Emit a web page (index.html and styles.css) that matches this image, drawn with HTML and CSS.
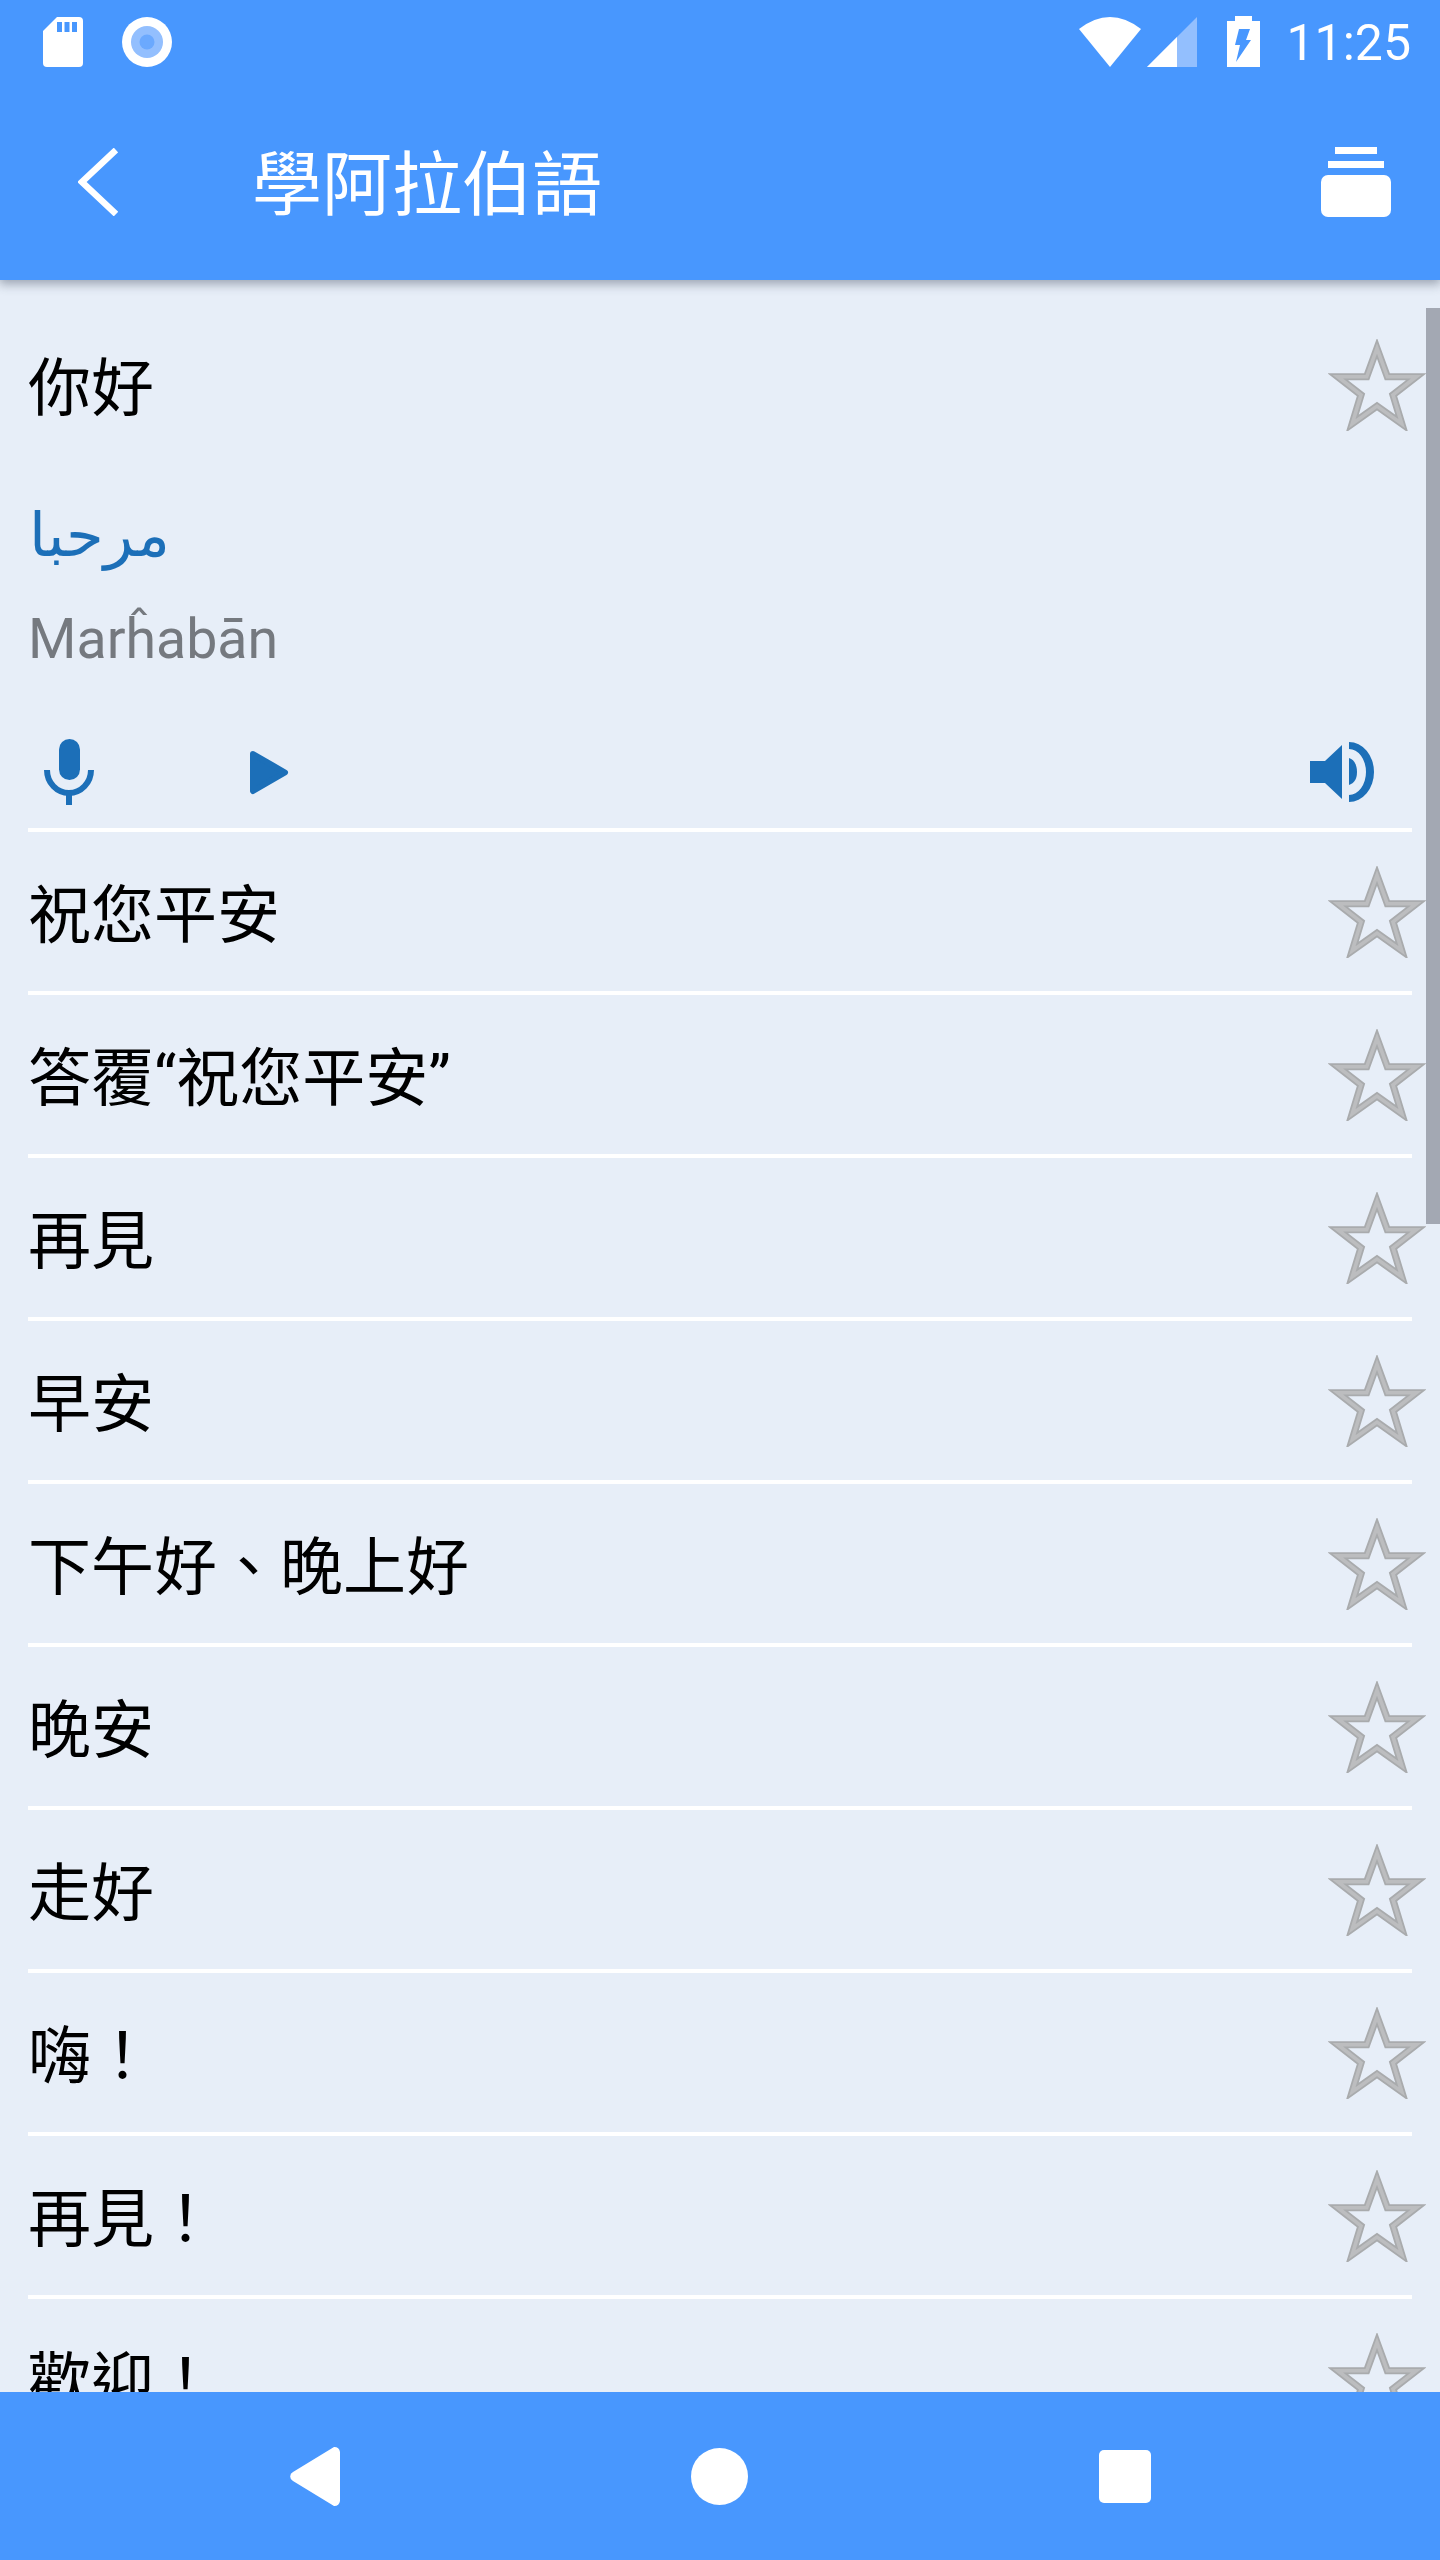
FILE: index.html
```html
<!DOCTYPE html>
<html lang="zh-Hant">
  <head>
    <title>學阿拉伯語</title>
    <meta charset="UTF-8" />
    <link rel="stylesheet" href="styles.css">
  </head>
  <body>
    <svg class="defs" width="0" height="0">
      <symbol id="star" viewBox="1.500 2 95 89">
        <polygon class="star-out" points="49,11 59,38.500 87,38.500 64.500,56 73,84 49,67 25,84 33.500,56 11,38.500 39,38.500" />
        <polygon class="star-in" points="49,11 59,38.500 87,38.500 64.500,56 73,84 49,67 25,84 33.500,56 11,38.500 39,38.500" />
      </symbol>
    </svg>

    <div class="phone">
      <header class="top">
        <div class="status">
          <div class="status-left">
            <svg width="40" height="50" viewBox="0 0 40 50">
              <path class="white" d="M14 0H36a4 4 0 0 1 4 4V46a4 4 0 0 1-4 4H4a4 4 0 0 1-4-4V14Z" />
              <path class="blue" d="M14 5h5v10h-5zM21.500 5h5v10h-5zM29 5h5v10h-5z" />
            </svg>
            <svg width="50" height="50" viewBox="0 0 50 50">
              <circle class="white" cx="25" cy="25" r="25" />
              <circle class="light" cx="25" cy="25" r="16" />
              <circle class="mid" cx="25" cy="25" r="7.500" />
            </svg>
          </div>
          <div class="status-right">
            <svg class="wifi" width="62" height="50" viewBox="0 0 62 50">
              <path class="white" d="M0 12Q31-12 62 12L31 50Z" />
            </svg>
            <svg class="signal" width="50" height="50" viewBox="0 0 50 50">
              <path class="light" d="M50 0V50H0Z" />
              <path class="white" d="M30 20V50H0Z" />
            </svg>
            <svg class="battery" width="33" height="51" viewBox="0 0 33 51">
              <path class="white" d="M8 0H25V5H33V51H0V5H8Z" />
              <path class="blue" d="M12 13H23L19 24H24L9 46L13 29H8Z" />
            </svg>
            <span class="time">11:25</span>
          </div>
        </div>
        <div class="toolbar">
          <svg class="back" width="40" height="68" viewBox="0 0 40 68">
            <polyline points="38,2 4,34 38,66" />
          </svg>
          <div class="title">學阿拉伯語</div>
          <svg width="70" height="70" viewBox="0 0 70 70">
            <path class="white" d="M14 0H56V7H14ZM7 14H63V21H7Z" />
            <rect class="white" x="0" y="28" width="70" height="42" rx="7" />
          </svg>
        </div>
      </header>

      <main class="list">
        <div class="scrollbar"></div>

        <section class="row open">
          <div class="row-head">
            <span class="phrase">你好</span>
            <svg class="star"><use href="#star" /></svg>
          </div>
          <div class="arabic" lang="ar" dir="rtl">مرحبا</div>
          <div class="latin">Marĥabān</div>
          <div class="controls">
            <svg class="mic" width="50" height="66" viewBox="0 0 50 66">
              <rect class="dark" x="15" y="0" width="21" height="41" rx="10.500" />
              <path class="arc" d="M3 31A22 23 0 0 0 47 31" />
              <rect class="dark" x="22" y="52" width="6" height="14" />
            </svg>
            <svg class="play" width="40" height="45" viewBox="0 0 40 45">
              <polygon points="4,4 36,22.500 4,41" />
            </svg>
            <svg class="speaker" width="64" height="62" viewBox="0 0 64 62">
              <path class="dark" d="M0 20H15L32 4V58L15 42H0Z" />
              <path class="dark" d="M39 17C45 19 47 25 47 31C47 37 45 42 39 44Z" />
              <path class="dark" d="M39 1A25 30 0 0 1 39 61V54A17 23 0 0 0 39 8Z" />
            </svg>
          </div>
        </section>

        <section class="row"><span class="phrase">祝您平安</span><svg class="star"><use href="#star" /></svg></section>
        <section class="row"><span class="phrase">答覆“祝您平安”</span><svg class="star"><use href="#star" /></svg></section>
        <section class="row"><span class="phrase">再見</span><svg class="star"><use href="#star" /></svg></section>
        <section class="row"><span class="phrase">早安</span><svg class="star"><use href="#star" /></svg></section>
        <section class="row"><span class="phrase">下午好、晚上好</span><svg class="star"><use href="#star" /></svg></section>
        <section class="row"><span class="phrase">晚安</span><svg class="star"><use href="#star" /></svg></section>
        <section class="row"><span class="phrase">走好</span><svg class="star"><use href="#star" /></svg></section>
        <section class="row"><span class="phrase">嗨！</span><svg class="star"><use href="#star" /></svg></section>
        <section class="row"><span class="phrase">再見！</span><svg class="star"><use href="#star" /></svg></section>
        <section class="row"><span class="phrase">歡迎！</span><svg class="star"><use href="#star" /></svg></section>
      </main>

      <footer class="nav">
        <svg width="50" height="59" viewBox="0 0 50 59">
          <path class="white" d="M44 0a6 6 0 0 1 6 5V54a6 6 0 0 1-6 5L3 34a5 5 0 0 1 0-9Z" />
        </svg>
        <svg width="57" height="57" viewBox="0 0 57 57">
          <circle class="white" cx="28.500" cy="28.500" r="28.500" />
        </svg>
        <svg width="52" height="53" viewBox="0 0 52 53">
          <rect class="white" width="52" height="53" rx="5" />
        </svg>
      </footer>
    </div>
  </body>
</html>
```

FILE: styles.css
```css
body {
  margin: 0;
  background-color: #e7eef8;
  font-family: Roboto, "Noto Sans CJK TC", sans-serif;
}

svg {
  display: block;
  flex: none;
}

.defs {
  position: absolute;
}

.white {
  fill: #fff;
}

.blue {
  fill: #4897fe;
}

.light {
  fill: #93bffe;
}

.mid {
  fill: #6ba9fe;
}

.dark {
  fill: #1c6fb8;
}

.phone {
  display: flex;
  flex-direction: column;
  height: 2560px;
  overflow: hidden;
}

.top {
  position: relative;
  z-index: 2;
  flex: none;
  height: 280px;
  background-color: #4897fe;
  box-shadow: 0px 3px 10px 1px rgba(60, 70, 90, 0.45);
}

.status {
  display: flex;
  justify-content: space-between;
  height: 84px;
  padding: 17px 29px 0 43px;
  box-sizing: border-box;
}

.status-left {
  display: flex;
  gap: 39px;
}

.status-right {
  display: flex;
}

.wifi {
  margin-right: 6px;
}

.battery {
  margin: -1px 26px 0 30px;
}

.time {
  color: #fff;
  font-size: 50px;
  line-height: 50px;
  margin-top: 1px;
}

.toolbar {
  display: flex;
  align-items: center;
  height: 196px;
  padding: 0 49px 0 78px;
}

.back polyline {
  fill: none;
  stroke: #fff;
  stroke-width: 6.500;
}

.title {
  flex: 1;
  margin-left: 134px;
  padding-top: 8px;
  color: #fff;
  font-size: 70px;
  line-height: 84px;
}

.list {
  position: relative;
  flex: 1;
  overflow: hidden;
}

.scrollbar {
  position: absolute;
  top: 28px;
  right: 0;
  width: 14px;
  height: 916px;
  background-color: #a3a8b3;
}

.row {
  display: flex;
  align-items: center;
  justify-content: space-between;
  height: 163px;
  margin: 0 28px;
  border-bottom: 4px solid #fff;
  box-sizing: border-box;
}

.row.open {
  display: block;
  height: 552px;
}

.row-head {
  display: flex;
  align-items: center;
  justify-content: space-between;
  height: 210px;
}

.phrase {
  padding-top: 8px;
  color: #000;
  font-size: 63px;
  line-height: 80px;
}

.star {
  width: 98px;
  height: 92px;
  margin-right: -14px;
}

.star-out {
  fill: none;
  stroke: #a9abad;
  stroke-width: 7;
  stroke-miterlimit: 10;
}

.star-in {
  fill: none;
  stroke: #bcbdbf;
  stroke-width: 3.500;
  stroke-miterlimit: 10;
}

.arabic {
  width: 142px;
  color: #1c6fb8;
  font-family: "DejaVu Sans", sans-serif;
  font-size: 61px;
  line-height: 90px;
  text-align: right;
}

.latin {
  margin-top: 25px;
  color: #75797f;
  font-size: 55.500px;
  line-height: 70px;
}

.controls {
  display: flex;
  align-items: center;
  height: 68px;
  margin-top: 63px;
  padding-left: 16px;
}

.arc {
  fill: none;
  stroke: #1c6fb8;
  stroke-width: 6;
}

.play {
  margin-left: 155px;
}

.play polygon {
  fill: #1c6fb8;
  stroke: #1c6fb8;
  stroke-width: 6;
  stroke-linejoin: round;
}

.speaker {
  margin-left: auto;
  margin-right: 38px;
}

.nav {
  flex: none;
  position: relative;
  z-index: 2;
  display: flex;
  align-items: center;
  height: 168px;
  padding: 0 289px 0 290px;
  justify-content: space-between;
  background-color: #4897fe;
}
```
